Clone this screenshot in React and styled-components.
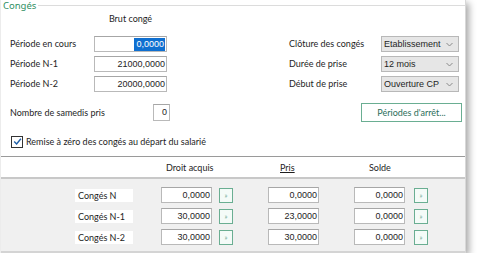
import React from 'react'
import styled, { createGlobalStyle } from 'styled-components'

const GlobalStyle = createGlobalStyle`
	body {
		margin: 0;
		background: #ffffff;
		font-family: Lato, 'Noto Sans', sans-serif;
		font-size: 9px;
		color: #1e1e1e;
	}
`

const periodes = [
	{ label: 'Période en cours', value: '0,0000', selected: true },
	{ label: 'Période N-1', value: '21000,0000' },
	{ label: 'Période N-2', value: '20000,0000' },
]

const choix = [
	{ label: 'Clôture des congés', value: 'Etablissement' },
	{ label: 'Durée de prise', value: '12 mois' },
	{ label: 'Début de prise', value: 'Ouverture CP' },
]

const conges = [
	{ label: 'Congés N', droit: '0,0000', pris: '0,0000', solde: '0,0000' },
	{ label: 'Congés N-1', droit: '30,0000', pris: '23,0000', solde: '0,0000' },
	{ label: 'Congés N-2', droit: '30,0000', pris: '30,0000', solde: '0,0000' },
]

function Chevron() {
	return (
		<svg width="7" height="5" viewBox="0 0 7 5">
			<path d="M0.5 1 L3.5 4 L6.5 1" fill="none" stroke="#8a8a8a" strokeWidth="1" />
		</svg>
	)
}

function CheckMark() {
	return (
		<svg width="9" height="9" viewBox="0 0 9 9">
			<path d="M1.2 4.6 L3.6 7 L7.9 1.8" fill="none" stroke="#1e5fa8" strokeWidth="1.4" />
		</svg>
	)
}

function App() {
	return (
		<>
			<GlobalStyle />
			<Panel>
				<Legend>
					<LegendText>Congés</LegendText>
					<LegendLine />
				</Legend>
				<TopForm>
					<span />
					<ColHeader>Brut congé</ColHeader>
					<span />
					<span />
					<span />
					{periodes.map((p, i) => (
						<React.Fragment key={p.label}>
							<Label>{p.label}</Label>
							<NumInput>
								{p.selected ? <Selected>{p.value}</Selected> : p.value}
							</NumInput>
							<span />
							<Label>{choix[i].label}</Label>
							<Select>
								<span>{choix[i].value}</span>
								<Chevron />
							</Select>
						</React.Fragment>
					))}
				</TopForm>
				<MiddleRow>
					<FixedLabel>Nombre de samedis pris</FixedLabel>
					<SmallInput>0</SmallInput>
					<ArretButton>Périodes d'arrêt...</ArretButton>
				</MiddleRow>
				<CheckRow>
					<CheckBox>
						<CheckMark />
					</CheckBox>
					<span>Remise à zéro des congés au départ du salarié</span>
				</CheckRow>
				<TableHead>
					<HeadCell $left={165}>Droit acquis</HeadCell>
					<HeadCell $left={279} $underline>
						Pris
					</HeadCell>
					<HeadCell $left={368}>Solde</HeadCell>
				</TableHead>
				<TableBody>
					{conges.map((c) => (
						<Row key={c.label}>
							<RowLabel>{c.label}</RowLabel>
							<CellInput $gap={28}>{c.droit}</CellInput>
							<Jump $gap={7}>»</Jump>
							<CellInput $gap={35}>{c.pris}</CellInput>
							<CellInput $gap={35}>{c.solde}</CellInput>
							<Jump $gap={9}>»</Jump>
						</Row>
					))}
				</TableBody>
			</Panel>
		</>
	)
}

const Panel = styled.div`
	width: 466px;
	height: 253px;
	background: #ffffff;
	box-shadow: 3px 3px 7px rgba(0, 0, 0, 0.35);
	display: flex;
	flex-direction: column;
	box-sizing: border-box;
	border-left: 1px solid #ececec;
	border-right: 1px solid #d8d8d8;
`

const Legend = styled.div`
	display: flex;
	align-items: flex-start;
	height: 12px;
	padding-left: 2px;
`

const LegendText = styled.span`
	color: #2f8f62;
	font-family: 'Noto Sans', sans-serif;
	font-size: 9.5px;
	line-height: 12px;
`

const LegendLine = styled.div`
	flex: 1;
	height: 1px;
	background: #dcdcdc;
	margin: 5px 0 0 2px;
`

const TopForm = styled.div`
	display: grid;
	grid-template-columns: 84px 73px 122px 92px 78px;
	grid-template-rows: 20px 16px 16px 16px;
	row-gap: 4px;
	padding-left: 9px;
	align-items: center;
`

const ColHeader = styled.div`
	align-self: start;
	text-align: center;
	line-height: 14px;
`

const Label = styled.div`
	line-height: 14px;
	white-space: nowrap;
`

const FixedLabel = styled(Label)`
	width: 143px;
`

const NumInput = styled.div`
	height: 16px;
	box-sizing: border-box;
	border: 1px solid #b9b9b9;
	border-top-color: #a6a6a6;
	background: #ffffff;
	font-family: 'Liberation Sans', Arial, sans-serif;
	font-size: 9px;
	line-height: 14px;
	text-align: right;
	padding-right: 1px;
	white-space: nowrap;
`

const Selected = styled.span`
	background: #0f6fd0;
	color: #ffffff;
	display: inline-block;
	line-height: 13px;
	padding: 0 1px 0 2px;
`

const Select = styled.div`
	height: 16px;
	box-sizing: border-box;
	border: 1px solid #b8b8b8;
	background: #e6e6e6;
	display: flex;
	align-items: center;
	justify-content: space-between;
	padding: 0 5px 0 2px;
	font-family: 'Liberation Sans', Arial, sans-serif;
	font-size: 9px;
`

const MiddleRow = styled.div`
	display: flex;
	align-items: center;
	padding-left: 9px;
	margin-top: 11px;
	height: 19px;
`

const SmallInput = styled(NumInput)`
	width: 17px;
	height: 17px;
	padding-right: 2px;
	line-height: 15px;
`

const ArretButton = styled.button`
	margin-left: 191px;
	width: 101px;
	height: 19px;
	border: 1px solid #6aae92;
	background: #ffffff;
	color: #2c6e5a;
	font-family: Lato, 'Noto Sans', sans-serif;
	font-size: 9px;
	padding: 0;
`

const CheckRow = styled.div`
	display: flex;
	align-items: center;
	gap: 3px;
	padding-left: 10px;
	margin-top: 13px;
	height: 13px;
`

const CheckBox = styled.div`
	width: 12px;
	height: 12px;
	box-sizing: border-box;
	border: 1px solid #333333;
	background: #ffffff;
	display: flex;
	align-items: center;
	justify-content: center;
`

const TableHead = styled.div`
	position: relative;
	margin-top: 8px;
	height: 20px;
	border-top: 1px solid #9a9a9a;
	border-bottom: 2px solid #c8c8c8;
	display: flex;
	align-items: center;
`

const HeadCell = styled.span`
	position: absolute;
	left: ${(p) => p.$left}px;
	text-decoration: ${(p) => (p.$underline ? 'underline' : 'none')};
`

const TableBody = styled.div`
	flex: 1;
	background: #f0f0f0;
	border-bottom: 2px solid #d4d4d4;
	display: flex;
	flex-direction: column;
	gap: 5px;
	padding: 8px 0 0 74px;
`

const Row = styled.div`
	display: flex;
	align-items: center;
	height: 16px;
`

const RowLabel = styled.div`
	width: 58px;
	height: 13px;
	background: #ffffff;
	line-height: 13px;
	padding-left: 3px;
	box-sizing: border-box;
`

const CellInput = styled(NumInput)`
	width: 51px;
	margin-left: ${(p) => p.$gap}px;
`

const Jump = styled.div`
	width: 14px;
	height: 15px;
	box-sizing: border-box;
	margin-left: ${(p) => p.$gap}px;
	border: 1px solid #6aae92;
	background: #f4fbf8;
	color: #6aa890;
	font-size: 7px;
	display: flex;
	align-items: center;
	justify-content: center;
`

export default App
